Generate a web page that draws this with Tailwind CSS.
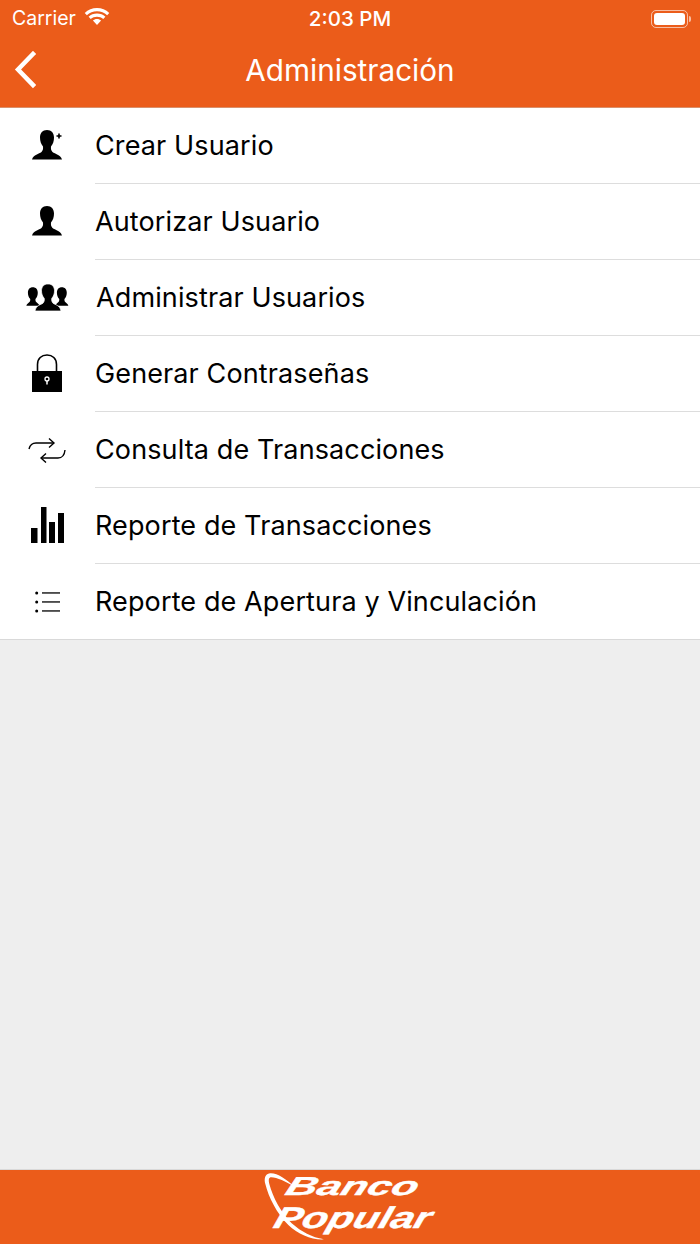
<!DOCTYPE html>
<html lang="en">
<head>
    <meta charset="UTF-8">
    <meta name="viewport" content="width=device-width, initial-scale=1.0">
    <title>Administración</title>
    <script src="https://cdn.jsdelivr.net/npm/@tailwindcss/browser@4"></script>
</head>
<body class="bg-[#eeeeee] h-[1244px] w-[700px] overflow-hidden flex flex-col font-['Inter','Liberation_Sans',sans-serif] antialiased">
    <header class="bg-[#eb5c1a] h-[108px] shrink-0 text-white border-b border-[#d9906c]">
        <div class="h-[37px] flex items-center justify-between pl-3 pr-[9px] pt-px">
            <div class="flex items-center gap-2 w-[200px]">
                <span class="text-[19.500px] leading-none">Carrier</span>
                <svg width="28" height="20" viewBox="0 0 26 18" class="-mt-1 -ml-px" fill="white">
                    <path d="M13 3.6c3.6 0 6.9 1.400 9.400 3.700l2-2.100C21.300 2.300 17.300.6 13 .6S4.700 2.300 1.600 5.200l2 2.100C6.100 5 9.400 3.600 13 3.600z"/>
                    <path d="M13 8.700c2.200 0 4.200.8 5.800 2.200l2-2.100c-2.100-1.900-4.800-3-7.800-3s-5.700 1.100-7.800 3l2 2.100c1.600-1.400 3.600-2.200 5.800-2.200z"/>
                    <path d="M13 10.800c-1.500 0-2.800.6-3.800 1.500L13 16.400l3.800-4.100c-1-.9-2.300-1.500-3.800-1.500z"/>
                </svg>
            </div>
            <span class="text-[20.500px] font-medium leading-none -ml-[3px]">2:03 PM</span>
            <div class="w-[200px] flex justify-end items-center">
                <div class="w-[37px] h-[18px] rounded-[5px] border border-white/60 p-[2px]">
                    <div class="w-full h-full bg-white rounded-[3px]"></div>
                </div>
                <div class="w-[2px] h-[6px] bg-white/60 rounded-r-sm ml-px"></div>
            </div>
        </div>
        <div class="relative h-[70px] flex items-center justify-center">
            <svg class="absolute left-[14px] top-[14px]" width="22" height="38" viewBox="0 0 22 38" fill="none" stroke="white" stroke-width="4.500" stroke-linecap="square">
                <path d="M19 3 L4 18.500 L19 34"/>
            </svg>
            <h1 class="text-[29.700px] leading-none -mt-[3px]">Administración</h1>
        </div>
    </header>

    <ul class="bg-white border-b border-[#d9d9d9] shrink-0 text-black text-[27px] tracking-[0.12px]">
        <li class="h-[76px] flex">
            <div class="w-[95px] flex items-center pl-[31px]">
                <svg width="34" height="34" viewBox="0 0 34 34" fill="black" class="-mt-[1px]">
                    <path d="M16 1c-4.500 0-7 3-7 7.500 0 3.500 1 6.500 3 9 .3 2.500-.2 4-1.500 5.500-2.500 2-8 2.500-9.500 7.500h30c-1.500-5-7-5.500-9.500-7.500-1.300-1.500-1.800-3-1.500-5.500 2-2.500 3-5.500 3-9 0-4.500-2.500-7.500-7-7.500z"/>
                    <path d="M27.200 4.500h1.600v1.700h1.700v1.600h-1.700v1.700h-1.600V7.800h-1.700V6.200h1.700z"/>
                </svg>
            </div>
            <div class="flex-1 flex items-center pt-[2px] border-b border-[#dddddd]">Crear Usuario</div>
        </li>
        <li class="h-[76px] flex">
            <div class="w-[95px] flex items-center pl-[31px]">
                <svg width="34" height="34" viewBox="0 0 34 34" fill="black" class="-mt-[1px]">
                    <path d="M16 1c-4.500 0-7 3-7 7.500 0 3.500 1 6.500 3 9 .3 2.500-.2 4-1.500 5.500-2.500 2-8 2.500-9.500 7.500h30c-1.500-5-7-5.500-9.500-7.500-1.300-1.500-1.800-3-1.500-5.500 2-2.500 3-5.500 3-9 0-4.500-2.500-7.500-7-7.500z"/>
                </svg>
            </div>
            <div class="flex-1 flex items-center pt-[2px] border-b border-[#dddddd]">Autorizar Usuario</div>
        </li>
        <li class="h-[76px] flex">
            <div class="w-[95px] flex items-center pl-[26px]">
                <svg width="44" height="30" viewBox="0 0 44 30" fill="black">
                    <path transform="translate(-0.5 -1) scale(1.05)" d="M7 5c-3 0-4.700 2-4.700 5.200 0 2.300.8 4.300 2.200 6 .2 1.600-.2 2.400-1 3.200C2.500 20.400 1.300 21 .8 22.500h12.400c-.5-1.500-1.700-2.100-2.700-3.100-.8-.8-1.200-1.600-1-3.200 1.400-1.700 2.200-3.700 2.200-6 0-3.200-1.700-5.200-4.700-5.200z"/>
                    <path transform="translate(28.500 -1) scale(1.05)" d="M7 5c-3 0-4.700 2-4.700 5.200 0 2.300.8 4.300 2.200 6 .2 1.600-.2 2.400-1 3.200C2.500 20.400 1.300 21 .8 22.500h12.400c-.5-1.500-1.700-2.100-2.700-3.100-.8-.8-1.200-1.600-1-3.200 1.400-1.700 2.200-3.700 2.200-6 0-3.200-1.700-5.200-4.700-5.200z"/>
                    <path stroke="white" stroke-width="0.700" d="M22 1c-4 0-6.500 2.500-6.500 6.800 0 3 1 5.500 2.800 7.700.2 2.200-.3 3.500-1.300 4.700-2 1.500-7 2-8 7.800h26c-1-5.800-6-6.300-8-7.800-1-1.200-1.500-2.500-1.300-4.700 1.800-2.200 2.800-4.700 2.800-7.700 0-4.300-2.500-6.800-6.500-6.800z"/>
                </svg>
            </div>
            <div class="flex-1 flex items-center pt-[2px] border-b border-[#dddddd]"><span class="ml-px">Administrar Usuarios</span></div>
        </li>
        <li class="h-[76px] flex">
            <div class="w-[95px] flex items-center pl-[32px]">
                <svg width="30" height="40" viewBox="0 0 30 40">
                    <path d="M5.500 18V10.500C5.500 4.500 9.500 1 15 1S24.500 4.500 24.500 10.500V18" fill="none" stroke="black" stroke-width="1.600"/>
                    <rect x="0" y="17" width="30" height="21" fill="black"/>
                    <circle cx="15" cy="25" r="2" fill="none" stroke="white" stroke-width="1.300"/>
                    <path d="M15 27V30.500" stroke="white" stroke-width="1.500"/>
                </svg>
            </div>
            <div class="flex-1 flex items-center pt-[2px] border-b border-[#dddddd]">Generar Contraseñas</div>
        </li>
        <li class="h-[76px] flex">
            <div class="w-[95px] flex items-center pl-[28px]">
                <svg width="38" height="26" viewBox="0 0 38 26" fill="none" stroke="black" stroke-width="1.400">
                    <path d="M1 12C2 8 4 6 8 6H26"/>
                    <path d="M21 1.500L26 6L21 10.500"/>
                    <path d="M37 13C36.500 18 34 21 30 21H13"/>
                    <path d="M18 16.500L13 21L18 25.500"/>
                </svg>
            </div>
            <div class="flex-1 flex items-center pt-[2px] border-b border-[#dddddd]">Consulta de Transacciones</div>
        </li>
        <li class="h-[76px] flex">
            <div class="w-[95px] flex items-center pl-[31px]">
                <svg width="33" height="36" viewBox="0 0 33 36" fill="black" class="-mt-[2px]">
                    <rect x="0" y="21" width="6.500" height="15"/>
                    <rect x="10" y="0" width="5.500" height="36"/>
                    <rect x="18" y="15" width="6" height="21"/>
                    <rect x="27" y="6" width="6" height="30"/>
                </svg>
            </div>
            <div class="flex-1 flex items-center pt-[2px] border-b border-[#dddddd]">Reporte de Transacciones</div>
        </li>
        <li class="h-[75px] flex">
            <div class="w-[95px] flex items-center pl-[35px]">
                <svg width="26" height="22" viewBox="0 0 26 22" fill="black">
                    <circle cx="1.700" cy="2" r="1.500"/>
                    <circle cx="1.700" cy="11" r="1.500"/>
                    <circle cx="1.700" cy="20" r="1.500"/>
                    <rect x="7" y="1.300" width="18" height="1.300"/>
                    <rect x="7" y="10.300" width="18" height="1.300"/>
                    <rect x="7" y="19.300" width="18" height="1.300"/>
                </svg>
            </div>
            <div class="flex-1 flex items-center pt-[2px]">Reporte de Apertura y Vinculación</div>
        </li>
    </ul>

    <div class="flex-1"></div>

    <footer class="bg-[#eb5c1a] h-[75px] shrink-0 border-t border-[#d9d9d9] flex justify-center text-white">
        <div class="relative w-[200px] h-[84px] -mt-[10px] font-['Liberation_Sans',sans-serif] font-bold italic">
            <svg class="absolute left-0 top-0" width="200" height="84" viewBox="0 0 600 252" fill="white">
                <path d="M130 78C110 58 80 38 60 40C44 42 42 58 46 72C56 112 80 160 115 195C145 224 185 240 222 238C185 232 155 216 125 190C95 160 68 112 58 72C55 60 56 52 64 52C80 52 110 66 130 78Z"/>
            </svg>
            <span class="absolute left-[37px] top-[13px] text-[26px] leading-none whitespace-nowrap origin-left scale-x-[1.66] -skew-x-12 [-webkit-text-stroke:0.4px_white]">Banco</span>
            <span class="absolute left-[25px] top-[43px] text-[30px] leading-none whitespace-nowrap origin-left scale-x-[1.4] -skew-x-12 [-webkit-text-stroke:0.4px_white]">Popular</span>
        </div>
    </footer>
</body>
</html>
